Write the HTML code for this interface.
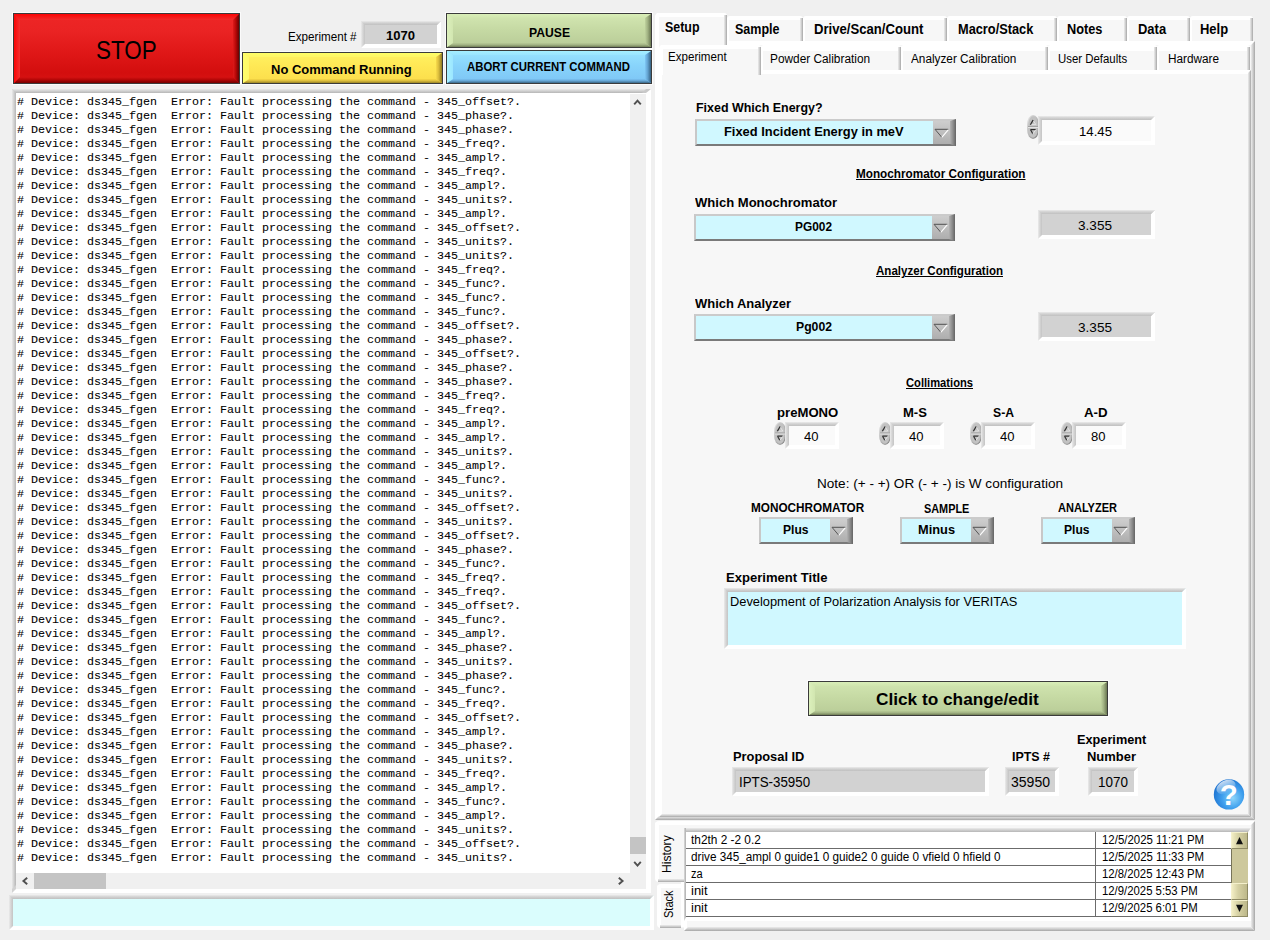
<!DOCTYPE html>
<html lang="en"><head><meta charset="utf-8"><title>Instrument Control</title>
<style>
html,body{margin:0;padding:0}
body{width:1270px;height:940px;background:#f0f0f0;position:relative;overflow:hidden;font-family:"Liberation Sans",sans-serif;color:#000}
.t{position:absolute;white-space:nowrap;transform-origin:0 0}
.a{position:absolute;box-sizing:border-box}
.btn{position:absolute;box-sizing:border-box;border:1px solid #3b3b3b;box-shadow:0 0 0 1px rgba(255,255,255,.7)}
.btn>i{position:absolute;display:block}
.sunk{position:absolute;box-sizing:border-box;background:#d2d2d2}
.sunk.w{background:#fafafa}
.sunk.c{background:#d0f8ff}
.sunk.i{background:#dafdfd}
.sunk>i{position:absolute;display:block}
.sunk>.sb,.sunk>.sr{background:#fff}
.sunk>.st{background:linear-gradient(#ebebeb,#d2d2d2 45%,#c0c0c0)}
.sunk>.sl{background:linear-gradient(90deg,#ebebeb,#d6d6d6 45%,#c4c4c4)}
.dd{position:absolute;box-sizing:border-box;border-style:solid;border-width:2px 0 2px 2px;border-color:#cbcbcb #6a6a6a #7a7a7a #c8c8c8;background:#d0f8ff}
.dd>b{position:absolute;top:0;bottom:0;background:linear-gradient(#cecece,#aeaeae)}
.dd>u{position:absolute;right:0;top:-2px;width:6px;background:linear-gradient(90deg,#b2b2b2,#8e8e8e 50%,#646464);clip-path:polygon(0 2px,100% 0,100% 100%,0 calc(100% - 2px))}
.dd svg{position:absolute}
#log{position:absolute;left:17.3px;top:95.4px;margin:0;font-family:"Liberation Mono",monospace;font-size:10.5px;line-height:14px;white-space:pre;color:#000;transform:scaleX(1.1111);transform-origin:0 0;-webkit-text-stroke:0.06px #000}
</style></head>
<body>
<div class="btn" style="left:13px;top:13px;width:227px;height:71px;background:linear-gradient(#ee2626 0%,#ea2323 25%,#e01818 55%,#d30e0e 85%,#d81414 100%);"><i style="left:0;top:0;width:225px;height:6px;background:linear-gradient(#fb0505,#f12c2c);clip-path:polygon(0 0,100% 0,calc(100% - 6px) 100%,6px 100%)"></i><i style="left:0;top:63px;width:225px;height:6px;background:linear-gradient(#d61212,#b40707 45%,#760000);clip-path:polygon(6px 0,calc(100% - 6px) 0,100% 100%,0 100%)"></i><i style="left:0;top:0;width:6px;height:69px;background:linear-gradient(90deg,#fb0606,#f33030);clip-path:polygon(0 0,100% 6px,100% calc(100% - 6px),0 100%)"></i><i style="left:219px;top:0;width:6px;height:69px;background:linear-gradient(90deg,#dd1a1a,#b80808 45%,#6c0000);clip-path:polygon(0 6px,100% 0,100% 100%,0 calc(100% - 6px))"></i></div>
<div class="t " style="left:95.5px;top:36.79px;font-size:26px;line-height:26px;transform:scaleX(0.8618);">STOP</div>
<div class="t " style="left:288.3px;top:31.04px;font-size:12px;line-height:12px;transform:scaleX(0.9703);">Experiment #</div>
<div class="sunk " style="left:361px;top:21px;width:80px;height:27px"><i class="sb" style="left:0;top:23px;width:80px;height:4px"></i><i class="sr" style="left:76px;top:0;width:4px;height:27px;clip-path:polygon(0 4px,100% 0,100% 100%,0 100%)"></i><i class="st" style="left:0;top:0;width:80px;height:4px;clip-path:polygon(0 0,100% 0,calc(100% - 4px) 100%,0 100%)"></i><i class="sl" style="left:0;top:0;width:4px;height:27px;clip-path:polygon(0 0,100% 4px,100% calc(100% - 4px),0 100%)"></i></div>
<div class="t " style="left:385.5px;top:29.00px;font-size:13px;line-height:13px;transform:scaleX(1.0028);font-weight:bold;">1070</div>
<div class="btn" style="left:242px;top:52px;width:201px;height:32px;background:linear-gradient(#fff262 0%,#ffe956 40%,#fbdc4a 100%);"><i style="left:0;top:0;width:199px;height:4px;background:linear-gradient(#ffff66,#fff566);clip-path:polygon(0 0,100% 0,calc(100% - 6px) 100%,6px 100%)"></i><i style="left:0;top:26px;width:199px;height:4px;background:linear-gradient(#f8d846,#dcbe3e 45%,#9a8426);clip-path:polygon(6px 0,calc(100% - 6px) 0,100% 100%,0 100%)"></i><i style="left:0;top:0;width:6px;height:30px;background:linear-gradient(90deg,#ffff6a,#fff86a);clip-path:polygon(0 0,100% 4px,100% calc(100% - 4px),0 100%)"></i><i style="left:193px;top:0;width:6px;height:30px;background:linear-gradient(90deg,#f9dc4c,#d8bb3c 45%,#8f7a22);clip-path:polygon(0 4px,100% 0,100% 100%,0 calc(100% - 4px))"></i></div>
<div class="t " style="left:271.3px;top:62.90px;font-size:13px;line-height:13px;transform:scaleX(0.9992);font-weight:bold;">No Command Running</div>
<div class="btn" style="left:446px;top:13px;width:206px;height:35px;background:linear-gradient(#d3e7b2 0%,#c6daa4 45%,#b8cb97 100%);"><i style="left:0;top:0;width:204px;height:4px;background:linear-gradient(#d9eeb8,#d0e5ae);clip-path:polygon(0 0,100% 0,calc(100% - 6px) 100%,6px 100%)"></i><i style="left:0;top:29px;width:204px;height:4px;background:linear-gradient(#b6c995,#a2b384 45%,#707d56);clip-path:polygon(6px 0,calc(100% - 6px) 0,100% 100%,0 100%)"></i><i style="left:0;top:0;width:6px;height:33px;background:linear-gradient(90deg,#dcf0bc,#d2e6b0);clip-path:polygon(0 0,100% 4px,100% calc(100% - 4px),0 100%)"></i><i style="left:198px;top:0;width:6px;height:33px;background:linear-gradient(90deg,#bfd29e,#a0b182 45%,#6a7752);clip-path:polygon(0 4px,100% 0,100% 100%,0 calc(100% - 4px))"></i></div>
<div class="t " style="left:528.5px;top:26.00px;font-size:13px;line-height:13px;transform:scaleX(0.9355);font-weight:bold;">PAUSE</div>
<div class="btn" style="left:446px;top:50px;width:206px;height:34px;background:linear-gradient(#99e4ff 0%,#88d4fb 45%,#7dc5f5 100%);"><i style="left:0;top:0;width:204px;height:4px;background:linear-gradient(#a4eeff,#9ae4ff);clip-path:polygon(0 0,100% 0,calc(100% - 6px) 100%,6px 100%)"></i><i style="left:0;top:28px;width:204px;height:4px;background:linear-gradient(#7cc3f3,#66a6d4 45%,#3a6686);clip-path:polygon(6px 0,calc(100% - 6px) 0,100% 100%,0 100%)"></i><i style="left:0;top:0;width:6px;height:32px;background:linear-gradient(90deg,#a8f2ff,#9ce6ff);clip-path:polygon(0 0,100% 4px,100% calc(100% - 4px),0 100%)"></i><i style="left:198px;top:0;width:6px;height:32px;background:linear-gradient(90deg,#80c8f6,#62a2d0 45%,#35607f);clip-path:polygon(0 4px,100% 0,100% 100%,0 calc(100% - 4px))"></i></div>
<div class="t " style="left:467.0px;top:61.34px;font-size:12px;line-height:12px;transform:scaleX(0.9478);font-weight:bold;">ABORT CURRENT COMMAND</div>
<div class="a" style="left:12px;top:89px;width:639px;height:804px;background:#fff;border-style:solid;border-width:4px 5px 4px 4px;border-color:#c9c9c9 #fff #fff #d2d2d2"></div>
<div class="a" style="left:12px;top:89px;width:634px;height:4px;background:linear-gradient(#e9e9e9,#b6b6b6);clip-path:polygon(0 0,100% 0,calc(100% - 4px) 100%,4px 100%)"></div>
<div class="a" style="left:12px;top:89px;width:4px;height:800px;background:linear-gradient(90deg,#e9e9e9,#b6b6b6);clip-path:polygon(0 0,100% 4px,100% calc(100% - 4px),0 100%)"></div>
<pre id="log"># Device: ds345_fgen  Error: Fault processing the command - 345_offset?.
# Device: ds345_fgen  Error: Fault processing the command - 345_phase?.
# Device: ds345_fgen  Error: Fault processing the command - 345_phase?.
# Device: ds345_fgen  Error: Fault processing the command - 345_freq?.
# Device: ds345_fgen  Error: Fault processing the command - 345_ampl?.
# Device: ds345_fgen  Error: Fault processing the command - 345_freq?.
# Device: ds345_fgen  Error: Fault processing the command - 345_ampl?.
# Device: ds345_fgen  Error: Fault processing the command - 345_units?.
# Device: ds345_fgen  Error: Fault processing the command - 345_ampl?.
# Device: ds345_fgen  Error: Fault processing the command - 345_offset?.
# Device: ds345_fgen  Error: Fault processing the command - 345_units?.
# Device: ds345_fgen  Error: Fault processing the command - 345_units?.
# Device: ds345_fgen  Error: Fault processing the command - 345_freq?.
# Device: ds345_fgen  Error: Fault processing the command - 345_func?.
# Device: ds345_fgen  Error: Fault processing the command - 345_func?.
# Device: ds345_fgen  Error: Fault processing the command - 345_func?.
# Device: ds345_fgen  Error: Fault processing the command - 345_offset?.
# Device: ds345_fgen  Error: Fault processing the command - 345_phase?.
# Device: ds345_fgen  Error: Fault processing the command - 345_offset?.
# Device: ds345_fgen  Error: Fault processing the command - 345_phase?.
# Device: ds345_fgen  Error: Fault processing the command - 345_phase?.
# Device: ds345_fgen  Error: Fault processing the command - 345_freq?.
# Device: ds345_fgen  Error: Fault processing the command - 345_freq?.
# Device: ds345_fgen  Error: Fault processing the command - 345_ampl?.
# Device: ds345_fgen  Error: Fault processing the command - 345_ampl?.
# Device: ds345_fgen  Error: Fault processing the command - 345_units?.
# Device: ds345_fgen  Error: Fault processing the command - 345_ampl?.
# Device: ds345_fgen  Error: Fault processing the command - 345_func?.
# Device: ds345_fgen  Error: Fault processing the command - 345_units?.
# Device: ds345_fgen  Error: Fault processing the command - 345_offset?.
# Device: ds345_fgen  Error: Fault processing the command - 345_units?.
# Device: ds345_fgen  Error: Fault processing the command - 345_offset?.
# Device: ds345_fgen  Error: Fault processing the command - 345_phase?.
# Device: ds345_fgen  Error: Fault processing the command - 345_func?.
# Device: ds345_fgen  Error: Fault processing the command - 345_freq?.
# Device: ds345_fgen  Error: Fault processing the command - 345_freq?.
# Device: ds345_fgen  Error: Fault processing the command - 345_offset?.
# Device: ds345_fgen  Error: Fault processing the command - 345_func?.
# Device: ds345_fgen  Error: Fault processing the command - 345_ampl?.
# Device: ds345_fgen  Error: Fault processing the command - 345_phase?.
# Device: ds345_fgen  Error: Fault processing the command - 345_units?.
# Device: ds345_fgen  Error: Fault processing the command - 345_phase?.
# Device: ds345_fgen  Error: Fault processing the command - 345_func?.
# Device: ds345_fgen  Error: Fault processing the command - 345_freq?.
# Device: ds345_fgen  Error: Fault processing the command - 345_offset?.
# Device: ds345_fgen  Error: Fault processing the command - 345_ampl?.
# Device: ds345_fgen  Error: Fault processing the command - 345_phase?.
# Device: ds345_fgen  Error: Fault processing the command - 345_units?.
# Device: ds345_fgen  Error: Fault processing the command - 345_freq?.
# Device: ds345_fgen  Error: Fault processing the command - 345_ampl?.
# Device: ds345_fgen  Error: Fault processing the command - 345_func?.
# Device: ds345_fgen  Error: Fault processing the command - 345_ampl?.
# Device: ds345_fgen  Error: Fault processing the command - 345_units?.
# Device: ds345_fgen  Error: Fault processing the command - 345_offset?.
# Device: ds345_fgen  Error: Fault processing the command - 345_units?.</pre>
<div class="a" style="left:630px;top:94px;width:16px;height:779px;background:#f0f0f0"></div>
<div class="a" style="left:630px;top:837px;width:16px;height:17px;background:#c4c4c4"></div>
<svg class="a" style="left:630px;top:94px" width="16" height="16" viewBox="0 0 16 16"><path d="M4.2 10.4 7.5 6.6 10.8 10.4" fill="none" stroke="#505050" stroke-width="1.9"/></svg>
<svg class="a" style="left:630px;top:856px" width="16" height="16" viewBox="0 0 16 16"><path d="M4.2 5.8 7.5 9.6 10.8 5.8" fill="none" stroke="#505050" stroke-width="1.9"/></svg>
<div class="a" style="left:16px;top:873px;width:630px;height:16px;background:#f0f0f0"></div>
<div class="a" style="left:34px;top:873px;width:72px;height:16px;background:#c4c4c4"></div>
<svg class="a" style="left:17px;top:873px" width="16" height="16" viewBox="0 0 16 16"><path d="M10.2 4.7 6.4 8 10.2 11.3" fill="none" stroke="#505050" stroke-width="1.9"/></svg>
<svg class="a" style="left:613px;top:873px" width="16" height="16" viewBox="0 0 16 16"><path d="M5.8 4.7 9.6 8 5.8 11.3" fill="none" stroke="#505050" stroke-width="1.9"/></svg>
<div class="sunk i" style="left:9px;top:895px;width:645px;height:35px"><i class="sb" style="left:0;top:31px;width:645px;height:4px"></i><i class="sr" style="left:641px;top:0;width:4px;height:35px;clip-path:polygon(0 4px,100% 0,100% 100%,0 100%)"></i><i class="st" style="left:0;top:0;width:645px;height:4px;clip-path:polygon(0 0,100% 0,calc(100% - 4px) 100%,0 100%)"></i><i class="sl" style="left:0;top:0;width:4px;height:35px;clip-path:polygon(0 0,100% 4px,100% calc(100% - 4px),0 100%)"></i></div>
<div class="a" style="left:655px;top:41px;width:600px;height:779px;background:#f7f7f7;border-top:4px solid #fff;border-left:4px solid #fff"></div>
<div class="a" style="left:1251px;top:41px;width:4px;height:779px;background:linear-gradient(90deg,#ececec,#cdcdcd 50%,#a6a6a6);clip-path:polygon(0 4px,100% 0,100% 100%,0 calc(100% - 4px))"></div>
<div class="a" style="left:655px;top:816px;width:600px;height:4px;background:linear-gradient(#ececec,#cdcdcd 50%,#a6a6a6);clip-path:polygon(4px 0,calc(100% - 4px) 0,100% 100%,0 100%)"></div>
<div class="a" style="left:655px;top:13px;width:72px;height:33px;background:#f7f7f7;border-top:4px solid #fff;border-left:4px solid #fff;border-radius:4px 3px 0 0"></div>
<div class="a" style="left:724px;top:15px;width:3px;height:31px;background:linear-gradient(90deg,#ececec,#cdcdcd 50%,#a6a6a6)"></div>
<div class="t " style="left:665.0px;top:20.35px;font-size:14px;line-height:14px;transform:scaleX(0.8871);font-weight:bold;">Setup</div>
<div class="a" style="left:727px;top:16px;width:76px;height:25px;background:#f7f7f7;border-top:4px solid #fff;border-left:2px solid #fff;border-radius:3px 3px 0 0"></div>
<div class="a" style="left:800px;top:18px;width:3px;height:23px;background:linear-gradient(90deg,#ececec,#cdcdcd 50%,#a6a6a6)"></div>
<div class="t " style="left:735.4px;top:22.35px;font-size:14px;line-height:14px;transform:scaleX(0.8936);font-weight:bold;">Sample</div>
<div class="a" style="left:803px;top:16px;width:144px;height:25px;background:#f7f7f7;border-top:4px solid #fff;border-left:2px solid #fff;border-radius:3px 3px 0 0"></div>
<div class="a" style="left:944px;top:18px;width:3px;height:23px;background:linear-gradient(90deg,#ececec,#cdcdcd 50%,#a6a6a6)"></div>
<div class="t " style="left:813.5px;top:22.35px;font-size:14px;line-height:14px;transform:scaleX(0.9375);font-weight:bold;">Drive/Scan/Count</div>
<div class="a" style="left:947px;top:16px;width:110px;height:25px;background:#f7f7f7;border-top:4px solid #fff;border-left:2px solid #fff;border-radius:3px 3px 0 0"></div>
<div class="a" style="left:1054px;top:18px;width:3px;height:23px;background:linear-gradient(90deg,#ececec,#cdcdcd 50%,#a6a6a6)"></div>
<div class="t " style="left:957.6px;top:22.35px;font-size:14px;line-height:14px;transform:scaleX(0.9129);font-weight:bold;">Macro/Stack</div>
<div class="a" style="left:1057px;top:16px;width:70px;height:25px;background:#f7f7f7;border-top:4px solid #fff;border-left:2px solid #fff;border-radius:3px 3px 0 0"></div>
<div class="a" style="left:1124px;top:18px;width:3px;height:23px;background:linear-gradient(90deg,#ececec,#cdcdcd 50%,#a6a6a6)"></div>
<div class="t " style="left:1067.4px;top:22.35px;font-size:14px;line-height:14px;transform:scaleX(0.9101);font-weight:bold;">Notes</div>
<div class="a" style="left:1127px;top:16px;width:63px;height:25px;background:#f7f7f7;border-top:4px solid #fff;border-left:2px solid #fff;border-radius:3px 3px 0 0"></div>
<div class="a" style="left:1187px;top:18px;width:3px;height:23px;background:linear-gradient(90deg,#ececec,#cdcdcd 50%,#a6a6a6)"></div>
<div class="t " style="left:1137.7px;top:22.35px;font-size:14px;line-height:14px;transform:scaleX(0.9260);font-weight:bold;">Data</div>
<div class="a" style="left:1190px;top:16px;width:63px;height:25px;background:#f7f7f7;border-top:4px solid #fff;border-left:2px solid #fff;border-radius:3px 3px 0 0"></div>
<div class="a" style="left:1250px;top:18px;width:3px;height:23px;background:linear-gradient(90deg,#ececec,#cdcdcd 50%,#a6a6a6)"></div>
<div class="t " style="left:1200.4px;top:22.35px;font-size:14px;line-height:14px;transform:scaleX(0.9262);font-weight:bold;">Help</div>
<div class="a" style="left:659px;top:70px;width:592px;height:747px;background:#f7f7f7;border-top:4px solid #fff;border-left:3px solid #fff"></div>
<div class="a" style="left:1248px;top:70px;width:3px;height:747px;background:linear-gradient(90deg,#ececec,#cdcdcd 50%,#a6a6a6);clip-path:polygon(0 3px,100% 0,100% 100%,0 calc(100% - 3px))"></div>
<div class="a" style="left:659px;top:814px;width:592px;height:3px;background:linear-gradient(#ececec,#cdcdcd 50%,#a6a6a6);clip-path:polygon(3px 0,calc(100% - 3px) 0,100% 100%,0 100%)"></div>
<div class="a" style="left:659px;top:45px;width:102px;height:30px;background:#f7f7f7;border-top:4px solid #fff;border-left:4px solid #fff;border-radius:4px 3px 0 0"></div>
<div class="a" style="left:758px;top:47px;width:3px;height:28px;background:linear-gradient(90deg,#ececec,#cdcdcd 50%,#a6a6a6)"></div>
<div class="t " style="left:668.3px;top:50.72px;font-size:12.5px;line-height:12.5px;transform:scaleX(0.9269);">Experiment</div>
<div class="a" style="left:761px;top:45px;width:140px;height:25px;background:#f7f7f7;border-top:6px solid #fff;border-left:2px solid #fff;border-radius:3px 3px 0 0"></div>
<div class="a" style="left:898px;top:47px;width:3px;height:23px;background:linear-gradient(90deg,#ececec,#cdcdcd 50%,#a6a6a6)"></div>
<div class="t " style="left:769.6px;top:52.72px;font-size:12.5px;line-height:12.5px;transform:scaleX(0.9478);">Powder Calibration</div>
<div class="a" style="left:901px;top:45px;width:146.5px;height:25px;background:#f7f7f7;border-top:6px solid #fff;border-left:2px solid #fff;border-radius:3px 3px 0 0"></div>
<div class="a" style="left:1044.5px;top:47px;width:3px;height:23px;background:linear-gradient(90deg,#ececec,#cdcdcd 50%,#a6a6a6)"></div>
<div class="t " style="left:911.2px;top:52.72px;font-size:12.5px;line-height:12.5px;transform:scaleX(0.9422);">Analyzer Calibration</div>
<div class="a" style="left:1047.5px;top:45px;width:109.5px;height:25px;background:#f7f7f7;border-top:6px solid #fff;border-left:2px solid #fff;border-radius:3px 3px 0 0"></div>
<div class="a" style="left:1154px;top:47px;width:3px;height:23px;background:linear-gradient(90deg,#ececec,#cdcdcd 50%,#a6a6a6)"></div>
<div class="t " style="left:1058.1px;top:52.72px;font-size:12.5px;line-height:12.5px;transform:scaleX(0.9126);">User Defaults</div>
<div class="a" style="left:1157px;top:45px;width:93px;height:25px;background:#f7f7f7;border-top:6px solid #fff;border-left:2px solid #fff;border-radius:3px 3px 0 0"></div>
<div class="a" style="left:1247px;top:47px;width:3px;height:23px;background:linear-gradient(90deg,#ececec,#cdcdcd 50%,#a6a6a6)"></div>
<div class="t " style="left:1168.2px;top:52.72px;font-size:12.5px;line-height:12.5px;transform:scaleX(0.9412);">Hardware</div>
<div class="t " style="left:695.7px;top:100.70px;font-size:13px;line-height:13px;transform:scaleX(0.9578);font-weight:bold;">Fixed Which Energy?</div>
<div class="dd" style="left:695px;top:119px;width:261px;height:27px"><b style="right:6px;width:17px"><svg width="17" height="23" viewBox="0 0 17 23" style="left:0;top:0"><path d="M2 8.3h13.2" stroke="#505050" stroke-width="1" fill="none"/><path d="M2 8.3 8.8 16.3" stroke="#585858" stroke-width="1" fill="none"/><path d="M8.8 16.3 15.2 8.9" stroke="#fff" stroke-width="1.1" fill="none"/></svg></b><u style="height:27px"></u></div>
<div class="t " style="left:724.4px;top:124.60px;font-size:13px;line-height:13px;transform:scaleX(0.9905);font-weight:bold;">Fixed Incident Energy in meV</div>
<svg class="a" style="left:1027px;top:115px" width="12" height="24" viewBox="0 0 12 24"><defs><linearGradient id="sg1" x1="0" x2="1" y1="0" y2="1"><stop offset="0" stop-color="#ededed"/><stop offset="0.5" stop-color="#b8b8b8"/><stop offset="1" stop-color="#7c7c7c"/></linearGradient></defs><rect x="0" y="0" width="12" height="24" rx="6.0" ry="9.600000000000001" fill="url(#sg1)"/><rect x="1.3" y="1.3" width="9.4" height="21.4" rx="4.7" ry="8.3" fill="#c2c2c2"/><path d="M1 11.6H11" stroke="#999" stroke-width="0.9"/><path d="M1 12.5H11" stroke="#e6e6e6" stroke-width="0.9"/><path d="M3.4 9.6H8.8" stroke="#e4e4e4" stroke-width="1"/><path d="M6.1 5.4 8.8 9.6" fill="none" stroke="#e4e4e4" stroke-width="1"/><path d="M3.4 9.8 6.1 5.0" fill="none" stroke="#2e2e2e" stroke-width="1.3"/><path d="M3.4 14.6H8.6" stroke="#2e2e2e" stroke-width="1.2"/><path d="M3.6 14.8 5.9 19.0" fill="none" stroke="#333" stroke-width="1.2"/><path d="M5.9 19.0 8.6 15.0" fill="none" stroke="#e6e6e6" stroke-width="1"/></svg>
<div class="sunk w" style="left:1038px;top:116px;width:117px;height:29px"><i class="sb" style="left:0;top:25px;width:117px;height:4px"></i><i class="sr" style="left:113px;top:0;width:4px;height:29px;clip-path:polygon(0 4px,100% 0,100% 100%,0 100%)"></i><i class="st" style="left:0;top:0;width:117px;height:4px;clip-path:polygon(0 0,100% 0,calc(100% - 4px) 100%,0 100%)"></i><i class="sl" style="left:0;top:0;width:4px;height:29px;clip-path:polygon(0 0,100% 4px,100% calc(100% - 4px),0 100%)"></i></div>
<div class="t " style="left:1079.2px;top:124.90px;font-size:13px;line-height:13px;transform:scaleX(1.0144);">14.45</div>
<div class="t " style="left:855.5px;top:168.24px;font-size:12px;line-height:12px;transform:scaleX(0.9780);font-weight:bold;text-decoration:underline;text-underline-offset:1px;">Monochromator Configuration</div>
<div class="t " style="left:694.6px;top:195.70px;font-size:13px;line-height:13px;transform:scaleX(1.0039);font-weight:bold;">Which Monochromator</div>
<div class="dd" style="left:694px;top:214px;width:261px;height:27px"><b style="right:6px;width:17px"><svg width="17" height="23" viewBox="0 0 17 23" style="left:0;top:0"><path d="M2 8.3h13.2" stroke="#505050" stroke-width="1" fill="none"/><path d="M2 8.3 8.8 16.3" stroke="#585858" stroke-width="1" fill="none"/><path d="M8.8 16.3 15.2 8.9" stroke="#fff" stroke-width="1.1" fill="none"/></svg></b><u style="height:27px"></u></div>
<div class="t " style="left:795.0px;top:219.50px;font-size:13px;line-height:13px;transform:scaleX(0.9142);font-weight:bold;">PG002</div>
<div class="sunk " style="left:1038px;top:210px;width:117px;height:29px"><i class="sb" style="left:0;top:25px;width:117px;height:4px"></i><i class="sr" style="left:113px;top:0;width:4px;height:29px;clip-path:polygon(0 4px,100% 0,100% 100%,0 100%)"></i><i class="st" style="left:0;top:0;width:117px;height:4px;clip-path:polygon(0 0,100% 0,calc(100% - 4px) 100%,0 100%)"></i><i class="sl" style="left:0;top:0;width:4px;height:29px;clip-path:polygon(0 0,100% 4px,100% calc(100% - 4px),0 100%)"></i></div>
<div class="t " style="left:1078.3px;top:219.00px;font-size:13px;line-height:13px;transform:scaleX(1.0451);">3.355</div>
<div class="t " style="left:876.0px;top:265.34px;font-size:12px;line-height:12px;transform:scaleX(0.9621);font-weight:bold;text-decoration:underline;text-underline-offset:1px;">Analyzer Configuration</div>
<div class="t " style="left:695.0px;top:297.40px;font-size:13px;line-height:13px;transform:scaleX(0.9967);font-weight:bold;">Which Analyzer</div>
<div class="dd" style="left:694px;top:314px;width:261px;height:27px"><b style="right:6px;width:17px"><svg width="17" height="23" viewBox="0 0 17 23" style="left:0;top:0"><path d="M2 8.3h13.2" stroke="#505050" stroke-width="1" fill="none"/><path d="M2 8.3 8.8 16.3" stroke="#585858" stroke-width="1" fill="none"/><path d="M8.8 16.3 15.2 8.9" stroke="#fff" stroke-width="1.1" fill="none"/></svg></b><u style="height:27px"></u></div>
<div class="t " style="left:795.5px;top:320.00px;font-size:13px;line-height:13px;transform:scaleX(0.9399);font-weight:bold;">Pg002</div>
<div class="sunk " style="left:1038px;top:312px;width:117px;height:29px"><i class="sb" style="left:0;top:25px;width:117px;height:4px"></i><i class="sr" style="left:113px;top:0;width:4px;height:29px;clip-path:polygon(0 4px,100% 0,100% 100%,0 100%)"></i><i class="st" style="left:0;top:0;width:117px;height:4px;clip-path:polygon(0 0,100% 0,calc(100% - 4px) 100%,0 100%)"></i><i class="sl" style="left:0;top:0;width:4px;height:29px;clip-path:polygon(0 0,100% 4px,100% calc(100% - 4px),0 100%)"></i></div>
<div class="t " style="left:1078.3px;top:320.50px;font-size:13px;line-height:13px;transform:scaleX(1.0451);">3.355</div>
<div class="t " style="left:906.0px;top:376.84px;font-size:12px;line-height:12px;transform:scaleX(0.9305);font-weight:bold;text-decoration:underline;text-underline-offset:1px;">Collimations</div>
<div class="t " style="left:777.4px;top:406.17px;font-size:13.5px;line-height:13.5px;transform:scaleX(0.9729);font-weight:bold;">preMONO</div>
<div class="t " style="left:902.5px;top:406.17px;font-size:13.5px;line-height:13.5px;transform:scaleX(0.9658);font-weight:bold;">M-S</div>
<div class="t " style="left:992.8px;top:406.17px;font-size:13.5px;line-height:13.5px;transform:scaleX(0.9032);font-weight:bold;">S-A</div>
<div class="t " style="left:1084.1px;top:406.17px;font-size:13.5px;line-height:13.5px;transform:scaleX(0.9836);font-weight:bold;">A-D</div>
<svg class="a" style="left:774px;top:422px" width="12" height="23" viewBox="0 0 12 23"><defs><linearGradient id="sg2" x1="0" x2="1" y1="0" y2="1"><stop offset="0" stop-color="#ededed"/><stop offset="0.5" stop-color="#b8b8b8"/><stop offset="1" stop-color="#7c7c7c"/></linearGradient></defs><rect x="0" y="0" width="12" height="23" rx="6.0" ry="9.200000000000001" fill="url(#sg2)"/><rect x="1.3" y="1.3" width="9.4" height="20.4" rx="4.7" ry="7.900000000000001" fill="#c2c2c2"/><path d="M1 11.1H11" stroke="#999" stroke-width="0.9"/><path d="M1 12.0H11" stroke="#e6e6e6" stroke-width="0.9"/><path d="M3.4 9.1H8.8" stroke="#e4e4e4" stroke-width="1"/><path d="M6.1 4.9 8.8 9.1" fill="none" stroke="#e4e4e4" stroke-width="1"/><path d="M3.4 9.3 6.1 4.5" fill="none" stroke="#2e2e2e" stroke-width="1.3"/><path d="M3.4 14.1H8.6" stroke="#2e2e2e" stroke-width="1.2"/><path d="M3.6 14.3 5.9 18.5" fill="none" stroke="#333" stroke-width="1.2"/><path d="M5.9 18.5 8.6 14.5" fill="none" stroke="#e6e6e6" stroke-width="1"/></svg>
<div class="sunk w" style="left:785px;top:422px;width:54px;height:27px"><i class="sb" style="left:0;top:23px;width:54px;height:4px"></i><i class="sr" style="left:50px;top:0;width:4px;height:27px;clip-path:polygon(0 4px,100% 0,100% 100%,0 100%)"></i><i class="st" style="left:0;top:0;width:54px;height:4px;clip-path:polygon(0 0,100% 0,calc(100% - 4px) 100%,0 100%)"></i><i class="sl" style="left:0;top:0;width:4px;height:27px;clip-path:polygon(0 0,100% 4px,100% calc(100% - 4px),0 100%)"></i></div>
<div class="t " style="left:803.6px;top:430.40px;font-size:13px;line-height:13px;transform:scaleX(1.0028);">40</div>
<svg class="a" style="left:879px;top:422px" width="12" height="23" viewBox="0 0 12 23"><defs><linearGradient id="sg3" x1="0" x2="1" y1="0" y2="1"><stop offset="0" stop-color="#ededed"/><stop offset="0.5" stop-color="#b8b8b8"/><stop offset="1" stop-color="#7c7c7c"/></linearGradient></defs><rect x="0" y="0" width="12" height="23" rx="6.0" ry="9.200000000000001" fill="url(#sg3)"/><rect x="1.3" y="1.3" width="9.4" height="20.4" rx="4.7" ry="7.900000000000001" fill="#c2c2c2"/><path d="M1 11.1H11" stroke="#999" stroke-width="0.9"/><path d="M1 12.0H11" stroke="#e6e6e6" stroke-width="0.9"/><path d="M3.4 9.1H8.8" stroke="#e4e4e4" stroke-width="1"/><path d="M6.1 4.9 8.8 9.1" fill="none" stroke="#e4e4e4" stroke-width="1"/><path d="M3.4 9.3 6.1 4.5" fill="none" stroke="#2e2e2e" stroke-width="1.3"/><path d="M3.4 14.1H8.6" stroke="#2e2e2e" stroke-width="1.2"/><path d="M3.6 14.3 5.9 18.5" fill="none" stroke="#333" stroke-width="1.2"/><path d="M5.9 18.5 8.6 14.5" fill="none" stroke="#e6e6e6" stroke-width="1"/></svg>
<div class="sunk w" style="left:890px;top:422px;width:54px;height:27px"><i class="sb" style="left:0;top:23px;width:54px;height:4px"></i><i class="sr" style="left:50px;top:0;width:4px;height:27px;clip-path:polygon(0 4px,100% 0,100% 100%,0 100%)"></i><i class="st" style="left:0;top:0;width:54px;height:4px;clip-path:polygon(0 0,100% 0,calc(100% - 4px) 100%,0 100%)"></i><i class="sl" style="left:0;top:0;width:4px;height:27px;clip-path:polygon(0 0,100% 4px,100% calc(100% - 4px),0 100%)"></i></div>
<div class="t " style="left:908.5px;top:430.40px;font-size:13px;line-height:13px;transform:scaleX(1.0028);">40</div>
<svg class="a" style="left:970px;top:422px" width="12" height="23" viewBox="0 0 12 23"><defs><linearGradient id="sg4" x1="0" x2="1" y1="0" y2="1"><stop offset="0" stop-color="#ededed"/><stop offset="0.5" stop-color="#b8b8b8"/><stop offset="1" stop-color="#7c7c7c"/></linearGradient></defs><rect x="0" y="0" width="12" height="23" rx="6.0" ry="9.200000000000001" fill="url(#sg4)"/><rect x="1.3" y="1.3" width="9.4" height="20.4" rx="4.7" ry="7.900000000000001" fill="#c2c2c2"/><path d="M1 11.1H11" stroke="#999" stroke-width="0.9"/><path d="M1 12.0H11" stroke="#e6e6e6" stroke-width="0.9"/><path d="M3.4 9.1H8.8" stroke="#e4e4e4" stroke-width="1"/><path d="M6.1 4.9 8.8 9.1" fill="none" stroke="#e4e4e4" stroke-width="1"/><path d="M3.4 9.3 6.1 4.5" fill="none" stroke="#2e2e2e" stroke-width="1.3"/><path d="M3.4 14.1H8.6" stroke="#2e2e2e" stroke-width="1.2"/><path d="M3.6 14.3 5.9 18.5" fill="none" stroke="#333" stroke-width="1.2"/><path d="M5.9 18.5 8.6 14.5" fill="none" stroke="#e6e6e6" stroke-width="1"/></svg>
<div class="sunk w" style="left:981px;top:422px;width:54px;height:27px"><i class="sb" style="left:0;top:23px;width:54px;height:4px"></i><i class="sr" style="left:50px;top:0;width:4px;height:27px;clip-path:polygon(0 4px,100% 0,100% 100%,0 100%)"></i><i class="st" style="left:0;top:0;width:54px;height:4px;clip-path:polygon(0 0,100% 0,calc(100% - 4px) 100%,0 100%)"></i><i class="sl" style="left:0;top:0;width:4px;height:27px;clip-path:polygon(0 0,100% 4px,100% calc(100% - 4px),0 100%)"></i></div>
<div class="t " style="left:999.5px;top:430.40px;font-size:13px;line-height:13px;transform:scaleX(1.0028);">40</div>
<svg class="a" style="left:1061px;top:422px" width="12" height="23" viewBox="0 0 12 23"><defs><linearGradient id="sg5" x1="0" x2="1" y1="0" y2="1"><stop offset="0" stop-color="#ededed"/><stop offset="0.5" stop-color="#b8b8b8"/><stop offset="1" stop-color="#7c7c7c"/></linearGradient></defs><rect x="0" y="0" width="12" height="23" rx="6.0" ry="9.200000000000001" fill="url(#sg5)"/><rect x="1.3" y="1.3" width="9.4" height="20.4" rx="4.7" ry="7.900000000000001" fill="#c2c2c2"/><path d="M1 11.1H11" stroke="#999" stroke-width="0.9"/><path d="M1 12.0H11" stroke="#e6e6e6" stroke-width="0.9"/><path d="M3.4 9.1H8.8" stroke="#e4e4e4" stroke-width="1"/><path d="M6.1 4.9 8.8 9.1" fill="none" stroke="#e4e4e4" stroke-width="1"/><path d="M3.4 9.3 6.1 4.5" fill="none" stroke="#2e2e2e" stroke-width="1.3"/><path d="M3.4 14.1H8.6" stroke="#2e2e2e" stroke-width="1.2"/><path d="M3.6 14.3 5.9 18.5" fill="none" stroke="#333" stroke-width="1.2"/><path d="M5.9 18.5 8.6 14.5" fill="none" stroke="#e6e6e6" stroke-width="1"/></svg>
<div class="sunk w" style="left:1072px;top:422px;width:54px;height:27px"><i class="sb" style="left:0;top:23px;width:54px;height:4px"></i><i class="sr" style="left:50px;top:0;width:4px;height:27px;clip-path:polygon(0 4px,100% 0,100% 100%,0 100%)"></i><i class="st" style="left:0;top:0;width:54px;height:4px;clip-path:polygon(0 0,100% 0,calc(100% - 4px) 100%,0 100%)"></i><i class="sl" style="left:0;top:0;width:4px;height:27px;clip-path:polygon(0 0,100% 4px,100% calc(100% - 4px),0 100%)"></i></div>
<div class="t " style="left:1090.5px;top:430.40px;font-size:13px;line-height:13px;transform:scaleX(1.0028);">80</div>
<div class="t " style="left:816.8px;top:476.80px;font-size:13px;line-height:13px;transform:scaleX(1.0430);">Note: (+ - +) OR (- + -) is W configuration</div>
<div class="t " style="left:750.7px;top:501.69px;font-size:12.3px;line-height:12.3px;transform:scaleX(0.9566);font-weight:bold;">MONOCHROMATOR</div>
<div class="t " style="left:924.0px;top:502.69px;font-size:12.3px;line-height:12.3px;transform:scaleX(0.8838);font-weight:bold;">SAMPLE</div>
<div class="t " style="left:1058.0px;top:501.69px;font-size:12.3px;line-height:12.3px;transform:scaleX(0.8962);font-weight:bold;">ANALYZER</div>
<div class="dd" style="left:759px;top:517px;width:94px;height:27px"><b style="right:6px;width:17px"><svg width="17" height="23" viewBox="0 0 17 23" style="left:0;top:0"><path d="M2 8.3h13.2" stroke="#505050" stroke-width="1" fill="none"/><path d="M2 8.3 8.8 16.3" stroke="#585858" stroke-width="1" fill="none"/><path d="M8.8 16.3 15.2 8.9" stroke="#fff" stroke-width="1.1" fill="none"/></svg></b><u style="height:27px"></u></div>
<div class="dd" style="left:900px;top:517px;width:94px;height:27px"><b style="right:6px;width:17px"><svg width="17" height="23" viewBox="0 0 17 23" style="left:0;top:0"><path d="M2 8.3h13.2" stroke="#505050" stroke-width="1" fill="none"/><path d="M2 8.3 8.8 16.3" stroke="#585858" stroke-width="1" fill="none"/><path d="M8.8 16.3 15.2 8.9" stroke="#fff" stroke-width="1.1" fill="none"/></svg></b><u style="height:27px"></u></div>
<div class="dd" style="left:1041px;top:517px;width:94px;height:27px"><b style="right:6px;width:17px"><svg width="17" height="23" viewBox="0 0 17 23" style="left:0;top:0"><path d="M2 8.3h13.2" stroke="#505050" stroke-width="1" fill="none"/><path d="M2 8.3 8.8 16.3" stroke="#585858" stroke-width="1" fill="none"/><path d="M8.8 16.3 15.2 8.9" stroke="#fff" stroke-width="1.1" fill="none"/></svg></b><u style="height:27px"></u></div>
<div class="t " style="left:782.5px;top:522.50px;font-size:13px;line-height:13px;transform:scaleX(0.9288);font-weight:bold;">Plus</div>
<div class="t " style="left:917.7px;top:522.50px;font-size:13px;line-height:13px;transform:scaleX(0.9853);font-weight:bold;">Minus</div>
<div class="t " style="left:1064.2px;top:522.50px;font-size:13px;line-height:13px;transform:scaleX(0.9288);font-weight:bold;">Plus</div>
<div class="t " style="left:725.7px;top:570.80px;font-size:13px;line-height:13px;transform:scaleX(1.0049);font-weight:bold;">Experiment Title</div>
<div class="sunk c" style="left:724px;top:588px;width:462px;height:61px"><i class="sb" style="left:0;top:57px;width:462px;height:4px"></i><i class="sr" style="left:458px;top:0;width:4px;height:61px;clip-path:polygon(0 4px,100% 0,100% 100%,0 100%)"></i><i class="st" style="left:0;top:0;width:462px;height:4px;clip-path:polygon(0 0,100% 0,calc(100% - 4px) 100%,0 100%)"></i><i class="sl" style="left:0;top:0;width:4px;height:61px;clip-path:polygon(0 0,100% 4px,100% calc(100% - 4px),0 100%)"></i></div>
<div class="t " style="left:729.5px;top:596.12px;font-size:12.5px;line-height:12.5px;transform:scaleX(1.0273);">Development of Polarization Analysis for VERITAS</div>
<div class="btn" style="left:808px;top:681px;width:300px;height:35px;background:linear-gradient(#d2e6b1 0%,#c6daa4 45%,#b8cb97 100%);"><i style="left:0;top:0;width:298px;height:4px;background:linear-gradient(#d9eeb8,#d0e5ae);clip-path:polygon(0 0,100% 0,calc(100% - 6px) 100%,6px 100%)"></i><i style="left:0;top:29px;width:298px;height:4px;background:linear-gradient(#b6c995,#a2b384 45%,#707d56);clip-path:polygon(6px 0,calc(100% - 6px) 0,100% 100%,0 100%)"></i><i style="left:0;top:0;width:6px;height:33px;background:linear-gradient(90deg,#dcf0bc,#d2e6b0);clip-path:polygon(0 0,100% 4px,100% calc(100% - 4px),0 100%)"></i><i style="left:292px;top:0;width:6px;height:33px;background:linear-gradient(90deg,#bfd29e,#a0b182 45%,#6a7752);clip-path:polygon(0 4px,100% 0,100% 100%,0 calc(100% - 4px))"></i></div>
<div class="t " style="left:876.4px;top:690.90px;font-size:16.3px;line-height:16.3px;transform:scaleX(1.0586);font-weight:bold;">Click to change/edit</div>
<div class="t " style="left:733.2px;top:749.70px;font-size:13px;line-height:13px;transform:scaleX(0.9884);font-weight:bold;">Proposal ID</div>
<div class="sunk " style="left:732px;top:767px;width:257px;height:29px"><i class="sb" style="left:0;top:25px;width:257px;height:4px"></i><i class="sr" style="left:253px;top:0;width:4px;height:29px;clip-path:polygon(0 4px,100% 0,100% 100%,0 100%)"></i><i class="st" style="left:0;top:0;width:257px;height:4px;clip-path:polygon(0 0,100% 0,calc(100% - 4px) 100%,0 100%)"></i><i class="sl" style="left:0;top:0;width:4px;height:29px;clip-path:polygon(0 0,100% 4px,100% calc(100% - 4px),0 100%)"></i></div>
<div class="t " style="left:738.6px;top:774.85px;font-size:14px;line-height:14px;transform:scaleX(0.9517);">IPTS-35950</div>
<div class="t " style="left:1012.4px;top:750.40px;font-size:13px;line-height:13px;transform:scaleX(0.9563);font-weight:bold;">IPTS #</div>
<div class="sunk " style="left:1005px;top:767px;width:54px;height:29px"><i class="sb" style="left:0;top:25px;width:54px;height:4px"></i><i class="sr" style="left:50px;top:0;width:4px;height:29px;clip-path:polygon(0 4px,100% 0,100% 100%,0 100%)"></i><i class="st" style="left:0;top:0;width:54px;height:4px;clip-path:polygon(0 0,100% 0,calc(100% - 4px) 100%,0 100%)"></i><i class="sl" style="left:0;top:0;width:4px;height:29px;clip-path:polygon(0 0,100% 4px,100% calc(100% - 4px),0 100%)"></i></div>
<div class="t " style="left:1011.4px;top:774.85px;font-size:14px;line-height:14px;transform:scaleX(1.0018);">35950</div>
<div class="t " style="left:1076.5px;top:732.80px;font-size:13px;line-height:13px;transform:scaleX(0.9788);font-weight:bold;">Experiment</div>
<div class="t " style="left:1086.7px;top:749.90px;font-size:13px;line-height:13px;transform:scaleX(0.9976);font-weight:bold;">Number</div>
<div class="sunk " style="left:1088px;top:767px;width:50px;height:29px"><i class="sb" style="left:0;top:25px;width:50px;height:4px"></i><i class="sr" style="left:46px;top:0;width:4px;height:29px;clip-path:polygon(0 4px,100% 0,100% 100%,0 100%)"></i><i class="st" style="left:0;top:0;width:50px;height:4px;clip-path:polygon(0 0,100% 0,calc(100% - 4px) 100%,0 100%)"></i><i class="sl" style="left:0;top:0;width:4px;height:29px;clip-path:polygon(0 0,100% 4px,100% calc(100% - 4px),0 100%)"></i></div>
<div class="t " style="left:1097.5px;top:774.85px;font-size:14px;line-height:14px;transform:scaleX(0.9632);">1070</div>
<svg class="a" style="left:1213px;top:778px" width="32" height="33" viewBox="0 0 32 33"><defs><radialGradient id="hg" cx="0.62" cy="0.62" r="0.75"><stop offset="0" stop-color="#8fd6fa"/><stop offset="0.45" stop-color="#3fa0ee"/><stop offset="1" stop-color="#1466c8"/></radialGradient><linearGradient id="hl" x1="0" y1="0" x2="0" y2="1"><stop offset="0" stop-color="#fff" stop-opacity="0.75"/><stop offset="1" stop-color="#fff" stop-opacity="0"/></linearGradient></defs><circle cx="16" cy="16.4" r="15.2" fill="url(#hg)"/><ellipse cx="13" cy="9" rx="10" ry="6.5" fill="url(#hl)" transform="rotate(-25 13 9)"/><text x="15.7" y="26.7" text-anchor="middle" font-family="Liberation Sans,sans-serif" font-weight="bold" font-size="29.5" fill="#fff">?</text></svg>
<div class="a" style="left:684px;top:821px;width:571px;height:110px;background:#f7f7f7;border-top:4px solid #fff;border-left:3px solid #fff"></div>
<div class="a" style="left:1251px;top:821px;width:4px;height:110px;background:linear-gradient(90deg,#ececec,#cdcdcd 50%,#a6a6a6);clip-path:polygon(0 4px,100% 0,100% 100%,0 calc(100% - 4px))"></div>
<div class="a" style="left:684px;top:927px;width:571px;height:4px;background:linear-gradient(#ececec,#cdcdcd 50%,#a6a6a6);clip-path:polygon(4px 0,calc(100% - 4px) 0,100% 100%,0 100%)"></div>
<div class="a" style="left:655px;top:821px;width:32px;height:61px;background:#f7f7f7;border-top:4px solid #fff;border-left:4px solid #fff;border-radius:4px 0 0 4px"></div>
<div class="a" style="left:658px;top:879px;width:26px;height:3px;background:linear-gradient(#ececec,#cdcdcd 50%,#a6a6a6)"></div>
<div class="a" style="left:657px;top:884px;width:27px;height:44px;background:#f7f7f7;border-top:4px solid #fff;border-left:4px solid #fff;border-radius:4px 0 0 4px"></div>
<div class="a" style="left:660px;top:925px;width:21px;height:3px;background:linear-gradient(#ececec,#cdcdcd 50%,#a6a6a6)"></div>
<div class="a" style="left:681px;top:882px;width:3px;height:45px;background:#fff"></div>
<div class="t" style="left:661.02px;top:872.5px;font-size:12.5px;line-height:12.5px;transform:rotate(-90deg) scaleX(0.9694);">History</div>
<div class="t" style="left:662.82px;top:918.4px;font-size:12.5px;line-height:12.5px;transform:rotate(-90deg) scaleX(0.8829);">Stack</div>
<div class="a" style="left:684px;top:828px;width:567px;height:93px;background:#fff"></div>
<div class="a" style="left:684px;top:828px;width:567px;height:4px;background:linear-gradient(#ececec,#d0d0d0 50%,#b6b6b6);clip-path:polygon(0 0,100% 0,calc(100% - 3px) 100%,0 100%)"></div>
<div class="a" style="left:684px;top:828px;width:2px;height:93px;background:linear-gradient(90deg,#dcdcdc,#adadad);clip-path:polygon(0 0,100% 0,100% calc(100% - 4px),0 100%)"></div>
<div class="a" style="left:686px;top:848px;width:545px;height:1px;background:#6b6b6b"></div>
<div class="a" style="left:686px;top:865px;width:545px;height:1px;background:#6b6b6b"></div>
<div class="a" style="left:686px;top:882px;width:545px;height:1px;background:#6b6b6b"></div>
<div class="a" style="left:686px;top:899px;width:545px;height:1px;background:#6b6b6b"></div>
<div class="a" style="left:686px;top:916px;width:545px;height:1px;background:#6b6b6b"></div>
<div class="a" style="left:1095px;top:832px;width:1px;height:85px;background:#6b6b6b"></div>
<div class="t " style="left:691.0px;top:833.92px;font-size:12.5px;line-height:12.5px;transform:scaleX(0.9476);">th2th 2 -2 0.2</div>
<div class="t " style="left:1101.6px;top:833.92px;font-size:12.5px;line-height:12.5px;transform:scaleX(0.9144);">12/5/2025 11:21 PM</div>
<div class="t " style="left:691.0px;top:850.92px;font-size:12.5px;line-height:12.5px;transform:scaleX(0.9379);">drive 345_ampl 0 guide1 0 guide2 0 guide 0 vfield 0 hfield 0</div>
<div class="t " style="left:1101.6px;top:850.92px;font-size:12.5px;line-height:12.5px;transform:scaleX(0.9144);">12/5/2025 11:33 PM</div>
<div class="t " style="left:691.0px;top:867.92px;font-size:12.5px;line-height:12.5px;transform:scaleX(0.8862);">za</div>
<div class="t " style="left:1101.6px;top:867.92px;font-size:12.5px;line-height:12.5px;transform:scaleX(0.9069);">12/8/2025 12:43 PM</div>
<div class="t " style="left:691.0px;top:884.92px;font-size:12.5px;line-height:12.5px;transform:scaleX(1.0389);">init</div>
<div class="t " style="left:1101.6px;top:884.92px;font-size:12.5px;line-height:12.5px;transform:scaleX(0.9069);">12/9/2025 5:53 PM</div>
<div class="t " style="left:691.0px;top:901.92px;font-size:12.5px;line-height:12.5px;transform:scaleX(1.0389);">init</div>
<div class="t " style="left:1101.6px;top:901.92px;font-size:12.5px;line-height:12.5px;transform:scaleX(0.9069);">12/9/2025 6:01 PM</div>
<div class="a" style="left:1231px;top:832px;width:17px;height:85px;background:#cdc89c"></div>
<div class="a" style="left:1231px;top:849px;width:1px;height:34px;background:#77745a"></div>
<div class="a" style="left:1231px;top:832px;width:17px;height:17px;background:linear-gradient(90deg,#f2edc4,#d6d1a4 40%,#bdb88a);border-style:solid;border-width:1px;border-color:#f4f0cc #8e8a64 #8e8a64 #f4f0cc"></div>
<div class="a" style="left:1231px;top:883px;width:17px;height:17px;background:linear-gradient(90deg,#f2edc4,#d6d1a4 40%,#bdb88a);border-style:solid;border-width:1px;border-color:#f4f0cc #8e8a64 #8e8a64 #f4f0cc"></div>
<div class="a" style="left:1231px;top:900px;width:17px;height:17px;background:linear-gradient(90deg,#f2edc4,#d6d1a4 40%,#bdb88a);border-style:solid;border-width:1px;border-color:#f4f0cc #8e8a64 #8e8a64 #f4f0cc"></div>
<svg class="a" style="left:1231px;top:832px" width="17" height="17" viewBox="0 0 17 17"><path d="M5 12.3 8.5 5 12 12.3z" fill="#111"/></svg>
<svg class="a" style="left:1231px;top:900px" width="17" height="17" viewBox="0 0 17 17"><path d="M5 4.8 8.5 12 12 4.8z" fill="#111"/></svg>
</body></html>
